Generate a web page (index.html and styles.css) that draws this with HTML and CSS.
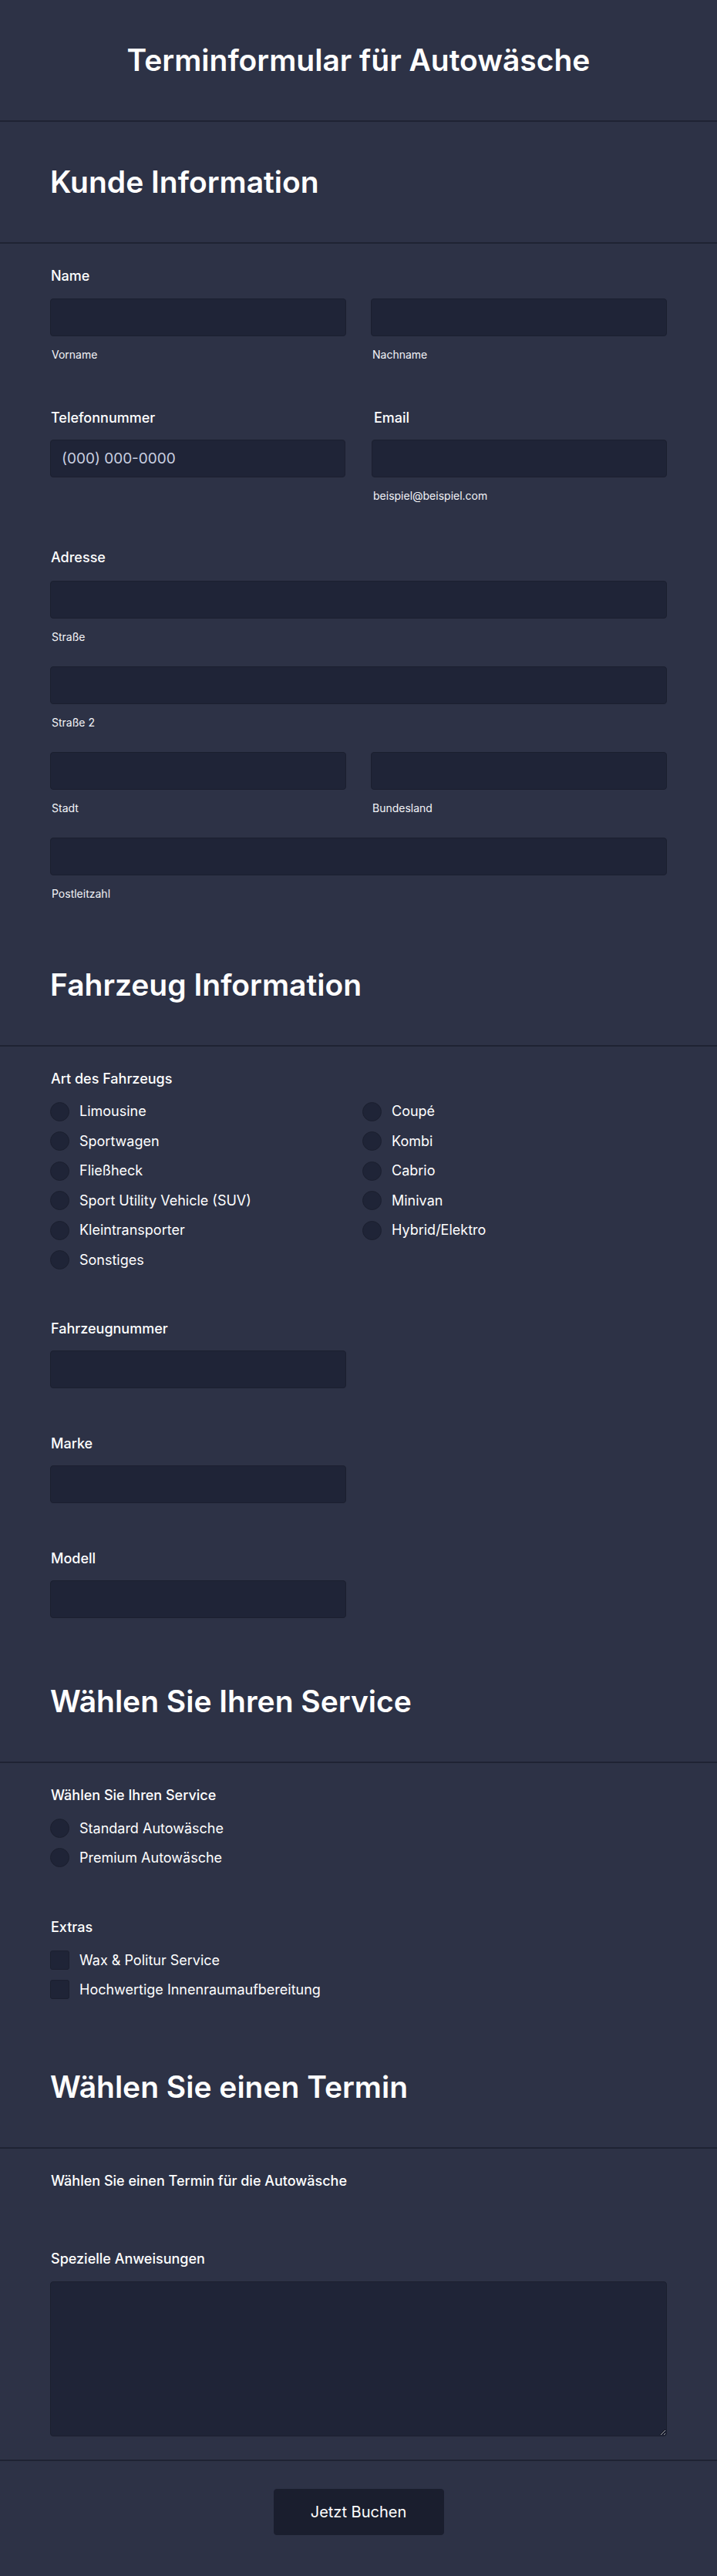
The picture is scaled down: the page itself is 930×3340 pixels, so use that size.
FILE: index.html
```html
<!DOCTYPE html>
<html lang="de">
<head>
<meta charset="utf-8">
<title>Terminformular für Autowäsche</title>
<link rel="stylesheet" href="styles.css">
</head>
<body>
<form class="form">
  <header class="block head main-head">
    <h1 class="title">Terminformular für Autowäsche</h1>
  </header>

  <section class="block head">
    <h2 class="section-title">Kunde Information</h2>
  </section>
  <section class="block body">
    <div class="field">
      <label class="label">Name</label>
      <div class="two">
        <div class="sub"><input class="input" type="text"><span class="hint">Vorname</span></div>
        <div class="sub"><input class="input" type="text"><span class="hint">Nachname</span></div>
      </div>
    </div>
    <div class="two phone-row">
      <div class="field">
        <label class="label">Telefonnummer</label>
        <input class="input" type="text" placeholder="(000) 000-0000">
      </div>
      <div class="field">
        <label class="label">Email</label>
        <div class="sub"><input class="input" type="email"><span class="hint">beispiel@beispiel.com</span></div>
      </div>
    </div>
    <div class="field address">
      <label class="label">Adresse</label>
      <div class="stack">
        <div class="sub"><input class="input" type="text"><span class="hint">Straße</span></div>
        <div class="sub"><input class="input" type="text"><span class="hint">Straße 2</span></div>
        <div class="two">
          <div class="sub"><input class="input" type="text"><span class="hint">Stadt</span></div>
          <div class="sub"><input class="input" type="text"><span class="hint">Bundesland</span></div>
        </div>
        <div class="sub"><input class="input" type="text"><span class="hint">Postleitzahl</span></div>
      </div>
    </div>
  </section>

  <section class="block head">
    <h2 class="section-title">Fahrzeug Information</h2>
  </section>
  <section class="block body">
    <div class="field">
      <label class="label">Art des Fahrzeugs</label>
      <div class="options grid-2">
        <label class="opt"><span class="radio"></span>Limousine</label>
        <label class="opt"><span class="radio"></span>Coupé</label>
        <label class="opt"><span class="radio"></span>Sportwagen</label>
        <label class="opt"><span class="radio"></span>Kombi</label>
        <label class="opt"><span class="radio"></span>Fließheck</label>
        <label class="opt"><span class="radio"></span>Cabrio</label>
        <label class="opt"><span class="radio"></span>Sport Utility Vehicle (SUV)</label>
        <label class="opt"><span class="radio"></span>Minivan</label>
        <label class="opt"><span class="radio"></span>Kleintransporter</label>
        <label class="opt"><span class="radio"></span>Hybrid/Elektro</label>
        <label class="opt"><span class="radio"></span>Sonstiges</label>
      </div>
    </div>
    <div class="field half">
      <label class="label">Fahrzeugnummer</label>
      <input class="input" type="text">
    </div>
    <div class="field half">
      <label class="label">Marke</label>
      <input class="input" type="text">
    </div>
    <div class="field half">
      <label class="label">Modell</label>
      <input class="input" type="text">
    </div>
  </section>

  <section class="block head">
    <h2 class="section-title">Wählen Sie Ihren Service</h2>
  </section>
  <section class="block body">
    <div class="field">
      <label class="label">Wählen Sie Ihren Service</label>
      <div class="options">
        <label class="opt"><span class="radio"></span>Standard Autowäsche</label>
        <label class="opt"><span class="radio"></span>Premium Autowäsche</label>
      </div>
    </div>
    <div class="field">
      <label class="label">Extras</label>
      <div class="options">
        <label class="opt"><span class="check"></span>Wax &amp; Politur Service</label>
        <label class="opt"><span class="check"></span>Hochwertige Innenraumaufbereitung</label>
      </div>
    </div>
  </section>

  <section class="block head">
    <h2 class="section-title">Wählen Sie einen Termin</h2>
  </section>
  <section class="block body">
    <div class="field date-field">
      <label class="label">Wählen Sie einen Termin für die Autowäsche</label>
    </div>
    <div class="field">
      <label class="label">Spezielle Anweisungen</label>
      <textarea class="input textarea"></textarea>
    </div>
  </section>

  <footer class="block foot">
    <button class="btn" type="button">Jetzt Buchen</button>
  </footer>
</form>
</body>
</html>
```

FILE: styles.css
```css
* {
  box-sizing: border-box;
}

html, body {
  margin: 0;
  padding: 0;
  background: #2d3246;
}

body {
  font-family: Inter, "Noto Sans", "Liberation Sans", sans-serif;
  color: #ffffff;
  min-height: 3340px;
}

.form {
  display: flex;
  flex-direction: column;
}

.block {
  padding-left: 65px;
  padding-right: 65px;
}

.head {
  padding-top: 55px;
  padding-bottom: 55px;
  border-bottom: 2px solid #1f2333;
}

.title {
  margin: 0;
  text-align: center;
  font-size: 39px;
  line-height: 46px;
  font-weight: 600;
}

.section-title {
  margin: 0;
  font-size: 39px;
  line-height: 46px;
  font-weight: 600;
}

.body {
  padding-top: 30px;
  padding-bottom: 30px;
  display: flex;
  flex-direction: column;
  gap: 60px;
}

.field {
  display: flex;
  flex-direction: column;
}

.label {
  font-size: 18px;
  line-height: 24px;
  font-weight: 500;
  margin-bottom: 17px;
  padding-left: 1px;
}

.two {
  display: grid;
  grid-template-columns: 1fr 1fr;
  column-gap: 32px;
}

.phone-row {
  column-gap: 34px;
  margin-bottom: -2px;
}

.phone-row .label {
  margin-bottom: 16px;
}

.phone-row .field:last-child .label {
  padding-left: 3px;
}

.address .label {
  margin-bottom: 18px;
}

.stack {
  display: flex;
  flex-direction: column;
  gap: 28px;
}

.sub {
  display: flex;
  flex-direction: column;
}

.hint {
  font-size: 14px;
  line-height: 20px;
  margin-top: 14px;
  padding-left: 2px;
  color: #f3f4f8;
}

.input {
  display: block;
  width: 100%;
  height: 49px;
  background: #1f2437;
  border: 1px solid #1b1f2f;
  border-radius: 4px;
  padding: 0 14px;
  font-family: inherit;
  font-size: 19px;
  color: #ffffff;
  outline: none;
}

.input::placeholder {
  color: #c9cfe0;
}

.half .input {
  width: calc(50% - 16px);
}

.half .label {
  margin-bottom: 16px;
}

.options {
  display: flex;
  flex-direction: column;
  gap: 10px;
  margin-top: 0;
  padding-bottom: 4px;
}

.grid-2 {
  display: grid;
  grid-template-columns: 1fr 1fr;
  row-gap: 10.5px;
  margin-top: -1px;
  padding-bottom: 3px;
}

.opt {
  display: flex;
  align-items: center;
  height: 28px;
  font-size: 18px;
  line-height: 28px;
  color: #ffffff;
}

.radio,
.check {
  flex: none;
  width: 25px;
  height: 25px;
  margin-right: 13px;
  background: #1f2437;
  border: 1px solid #1b1f2f;
}

.radio {
  border-radius: 50%;
}

.check {
  border-radius: 3px;
}

.date-field {
  padding-bottom: 17px;
}

.date-field .label {
  margin-bottom: 0;
}

.textarea {
  height: 201px;
  padding: 12px 14px;
  resize: vertical;
}

.foot {
  padding-top: 36px;
  padding-bottom: 49px;
  display: flex;
  justify-content: center;
  border-top: 2px solid #1f2333;
}

.btn {
  width: 221px;
  height: 60px;
  background: #1a1e2e;
  border: 1px solid #1a1e2e;
  border-radius: 4px;
  color: #ffffff;
  font-family: inherit;
  font-size: 20px;
  font-weight: 400;
  cursor: pointer;
}
```
